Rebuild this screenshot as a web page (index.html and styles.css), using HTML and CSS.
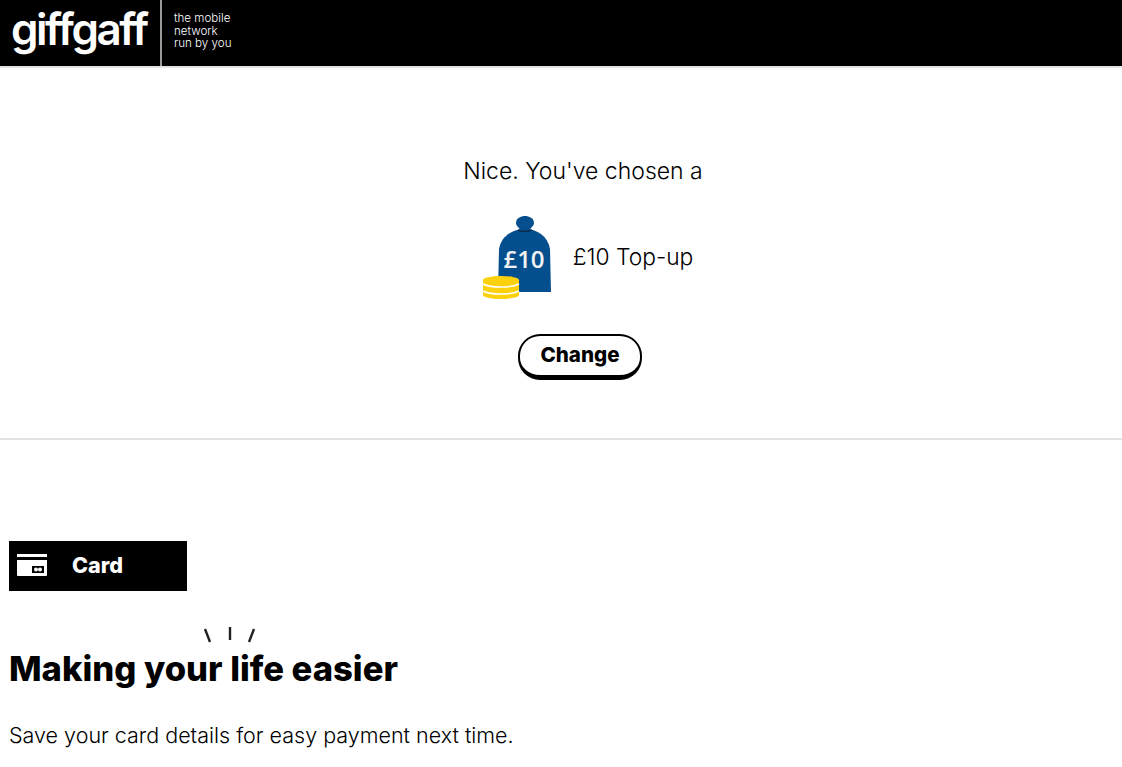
FILE: index.html
```html
<!DOCTYPE html>
<html lang="en">
<head>
  <meta charset="UTF-8" />
  <title>giffgaff – Top-up</title>
  <link rel="stylesheet" href="styles.css">
</head>
<body>

  <header class="site-header">
    <div class="logo">giffgaff</div>
    <div class="tagline">
      <span>the mobile</span>
      <span>network</span>
      <span>run by you</span>
    </div>
  </header>

  <section class="summary">
    <p class="summary-title">Nice. You've chosen a</p>
    <div class="product">
      <svg class="bag" width="69" height="84" viewBox="0 0 69 84">
        <path d="M42 13C54 13 65 20 67 33L68 76H15L16 33C18 20 30 13 42 13Z" fill="#064f8e"/>
        <path d="M33 7C33 2 38 0 42 0S51 2 51 7C51 10 48 11 47 14H37C36 11 33 10 33 7Z" fill="#064f8e"/>
        <path d="M35 14C40 16 44 16 49 14" fill="none" stroke="#0a2a4a" stroke-width="1.4"/>
        <text x="41" y="52" class="bag-text">£10</text>
        <path d="M0 64a18 4 0 0 1 36 0v15a18 4 0 0 1-36 0z" fill="#fcd20f"/>
        <path d="M0 68c8 4 28 4 36 0M0 75c8 4 28 4 36 0" fill="none" stroke="#fff" stroke-width="1.6"/>
      </svg>
      <span class="product-name">£10 Top-up</span>
    </div>
    <button class="change-btn">Change</button>
  </section>

  <section class="payment">
    <div class="card-tab">
      <svg width="30" height="22" viewBox="0 0 30 22">
        <path d="M0 0h30v3H0z" fill="#fff"/>
        <path d="M0 6h30v15a1 1 0 0 1-1 1H1a1 1 0 0 1-1-1z" fill="#fff"/>
        <rect x="15" y="12" width="12" height="7" fill="#000"/>
        <circle cx="19" cy="15.5" r="2" fill="#fff"/>
        <circle cx="23" cy="15.5" r="2" fill="#fff"/>
      </svg>
      <span>Card</span>
    </div>
    <div class="heading-wrap">
      <svg class="sparks" width="54" height="16" viewBox="0 0 54 16">
        <path d="M2 2l5 13M27 0v13M51 2l-5 13" stroke="#222" stroke-width="2.4" fill="none"/>
      </svg>
      <h2>Making your life easier</h2>
    </div>
    <p class="save-note">Save your card details for easy payment next time.</p>
  </section>

</body>
</html>
```

FILE: styles.css
```css
* { box-sizing: border-box; margin: 0; padding: 0; }
html, body { height: 767px; overflow: hidden; }
body {
  font-family: 'Inter', 'Open Sans', sans-serif;
  background: #fff;
  color: #000;
}

.site-header {
  height: 68px;
  background: #000;
  border-bottom: 2px solid #e2e2e2;
  display: flex;
  color: #fff;
}

.logo {
  width: 162px;
  padding-left: 11px;
  border-right: 2px solid #9a9a9a;
  font-weight: 600;
  font-size: 44px;
  line-height: 58px;
  letter-spacing: -2.5px;
}

.tagline {
  padding: 12px 0 0 12px;
  display: flex;
  flex-direction: column;
  font-size: 11.6px;
  line-height: 12.7px;
  font-weight: 300;
}

.summary {
  height: 372px;
  border-bottom: 2px solid #e4e4e4;
  display: flex;
  flex-direction: column;
  align-items: center;
  padding: 89px 0 0 44px;
}

.summary-title {
  font-size: 23px;
  line-height: 28px;
  font-weight: 300;
}

.product {
  display: flex;
  align-items: center;
  gap: 21px;
  margin-top: 31px;
  margin-left: 10px;
}

.bag { display: block; }
.bag-text {
  font-family: 'Open Sans', sans-serif;
  font-size: 24px;
  font-weight: 600;
  fill: #f2f2f2;
  text-anchor: middle;
}

.product-name {
  font-size: 22.8px;
  font-weight: 300;
  margin-bottom: 4px;
}

.change-btn {
  margin-top: 34px;
  width: 124px;
  height: 46px;
  margin-left: -6px;
  padding-bottom: 2px;
  background: #fff;
  color: #000;
  border: 2px solid #000;
  border-bottom-width: 5px;
  border-radius: 22px;
  font-family: inherit;
  font-size: 20.6px;
  font-weight: 800;
}

.payment {
  padding: 101px 0 0 9px;
}

.card-tab {
  width: 178px;
  height: 50px;
  background: #000;
  color: #fff;
  display: flex;
  align-items: center;
  padding: 0 0 2px 8px;
  gap: 25px;
  font-size: 21.6px;
  font-weight: 800;
}

.heading-wrap {
  margin-top: 36px;
  position: relative;
}

.sparks {
  position: absolute;
  left: 194px;
  top: 0;
}

h2 {
  padding-top: 18px;
  font-size: 34.6px;
  line-height: 46px;
  font-weight: 800;
}

.save-note {
  margin-top: 30px;
  font-size: 21.5px;
  line-height: 28px;
  font-weight: 300;
}
```
